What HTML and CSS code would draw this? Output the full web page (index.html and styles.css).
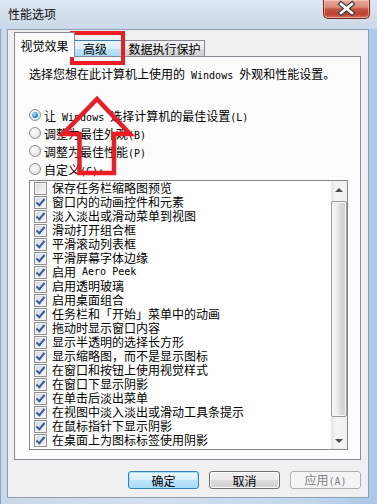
FILE: index.html
```html
<!DOCTYPE html>
<html lang="zh-CN">
<head>
  <meta charset="utf-8">
  <title>性能选项</title>
  <link rel="stylesheet" href="styles.css">
</head>
<body>
  <div class="window">
    <div class="titlebar">
      <span class="title">性能选项</span>
      <div class="close">
        <svg width="47" height="19" viewBox="0 0 47 19">
          <path d="M18 5 L29 14 M29 5 L18 14" stroke="#3f3f3f" stroke-width="5" stroke-linecap="square" fill="none"/>
          <path d="M18 5 L29 14 M29 5 L18 14" stroke="#ffffff" stroke-width="2.6" stroke-linecap="square" fill="none"/>
        </svg>
      </div>
    </div>

    <div class="client">
      <div class="tabs">
        <div class="tab active">视觉效果</div>
        <div class="tab hover">高级</div>
        <div class="tab wide">数据执行保护</div>
      </div>

      <div class="panel">
        <p class="intro">选择您想在此计算机上使用的<span class="latin"> Windows </span>外观和性能设置。</p>

        <div class="radios">
          <div class="radio-row"><span class="radio on"></span><span>让<span class="latin"> Windows </span>选择计算机的最佳设置<span class="latin">(L)</span></span></div>
          <div class="radio-row"><span class="radio"></span><span>调整为最佳外观<span class="latin">(B)</span></span></div>
          <div class="radio-row"><span class="radio"></span><span>调整为最佳性能<span class="latin">(P)</span></span></div>
          <div class="radio-row"><span class="radio"></span><span>自定义<span class="latin">(C):</span></span></div>
        </div>

        <div class="listbox">
          <ul class="items">
            <li><span class="check"></span>保存任务栏缩略图预览</li>
            <li><span class="check on"></span>窗口内的动画控件和元素</li>
            <li><span class="check on"></span>淡入淡出或滑动菜单到视图</li>
            <li><span class="check on"></span>滑动打开组合框</li>
            <li><span class="check on"></span>平滑滚动列表框</li>
            <li><span class="check on"></span>平滑屏幕字体边缘</li>
            <li><span class="check on"></span>启用<span class="latin">&nbsp;Aero Peek</span></li>
            <li><span class="check on"></span>启用透明玻璃</li>
            <li><span class="check on"></span>启用桌面组合</li>
            <li><span class="check on"></span>任务栏和「开始」菜单中的动画</li>
            <li><span class="check on"></span>拖动时显示窗口内容</li>
            <li><span class="check on"></span>显示半透明的选择长方形</li>
            <li><span class="check on"></span>显示缩略图，而不是显示图标</li>
            <li><span class="check on"></span>在窗口和按钮上使用视觉样式</li>
            <li><span class="check on"></span>在窗口下显示阴影</li>
            <li><span class="check on"></span>在单击后淡出菜单</li>
            <li><span class="check on"></span>在视图中淡入淡出或滑动工具条提示</li>
            <li><span class="check on"></span>在鼠标指针下显示阴影</li>
            <li><span class="check on"></span>在桌面上为图标标签使用阴影</li>
          </ul>
          <div class="scrollbar">
            <div class="sb-btn"><span class="tri up"></span></div>
            <div class="sb-track"><div class="sb-thumb"></div></div>
            <div class="sb-btn"><span class="tri down"></span></div>
          </div>
        </div>
      </div>

      <div class="buttons">
        <button class="btn default">确定</button>
        <button class="btn">取消</button>
        <button class="btn disabled">应用<span class="latin">(A)</span></button>
      </div>
    </div>

    <!-- red annotation drawn over the dialog -->
    <div class="mark-box"></div>
    <svg class="mark-arrow" width="377" height="504" viewBox="0 0 377 504">
      <polygon points="97,99 130,134 114,134 114,173 79.5,173 79.5,134 63,134" fill="none" stroke="#ec1c24" stroke-width="4.5" stroke-linejoin="miter"/>
    </svg>
  </div>
</body>
</html>
```

FILE: styles.css
```css
* {
  box-sizing: border-box;
}

body {
  margin: 0;
  background: #c6d8eb;
  color: #000;
  font-family: "Noto Sans CJK SC", sans-serif;
  font-size: 12px;
}

.latin {
  font-family: "DejaVu Sans Mono", monospace;
  font-size: 10px;
}

.window {
  position: relative;
  width: 377px;
  height: 504px;
  overflow: hidden;
  background: linear-gradient(90deg, #c9d8e8 0%, #d3dfec 40%, #c4d7ec 80%, #a9c8ea 100%);
  box-shadow: inset 1px 0 0 #8ea4bd;
}

.titlebar {
  display: flex;
  justify-content: space-between;
  align-items: flex-start;
  height: 29px;
  padding-left: 8px;
  background: linear-gradient(180deg, #dfe8f2 0%, #d2deeb 60%, #cad9ea 100%);
}

.title {
  margin-top: 6px;
  line-height: 16px;
  color: #0c0c0c;
}

.close {
  width: 47px;
  height: 19px;
  margin-right: 7px;
  border: 1px solid #6b2a22;
  border-top: none;
  border-radius: 0 0 5px 5px;
  background: linear-gradient(180deg, #e9a99c 0%, #db8a78 40%, #c65441 50%, #c0432f 80%, #d7775f 100%);
  box-shadow: inset 0 0 0 1px rgba(255, 220, 210, 0.5);
}

.close svg {
  display: block;
  margin: -1px 0 0 -1px;
}

.client {
  width: 362px;
  height: 469px;
  margin-left: 7px;
  padding-top: 2px;
  border: 1px solid #8d9fb5;
  background: #f0f0f0;
}

.tabs {
  display: flex;
  align-items: flex-end;
  height: 24px;
  padding-left: 6px;
}

.tab {
  height: 16px;
  line-height: 15px;
  border: 1px solid #898c95;
  border-bottom: none;
  background: linear-gradient(180deg, #f2f2f2 0%, #ebebeb 50%, #dddddd 50%, #cfcfcf 100%);
  text-align: center;
}

.tab.active {
  position: relative;
  z-index: 2;
  width: 61px;
  height: 25px;
  margin-bottom: -1px;
  padding-top: 6px;
  line-height: 14px;
  background: #fcfcfc;
}

.tab.hover {
  width: 51px;
  margin-left: -2px;
  padding-left: 9px;
  text-align: left;
  border-color: #3c7fb1;
  background: linear-gradient(180deg, #eaf6fd 0%, #d9f0fc 50%, #bee6fd 50%, #a7d9f5 100%);
}

.tab.wide {
  width: 81px;
}

.panel {
  width: 347px;
  height: 404px;
  margin-left: 6px;
  padding: 10px 0 0 14px;
  border: 1px solid #898c95;
  background: #fcfcfc;
}

.intro {
  margin: 0;
  line-height: 14px;
}

.radios {
  margin-top: 23px;
}

.radio-row {
  display: flex;
  align-items: center;
  height: 18px;
}

.radio {
  position: relative;
  width: 12px;
  height: 12px;
  margin-right: 3px;
  border: 1px solid #8e8f8f;
  border-radius: 50%;
  background: radial-gradient(circle at 40% 35%, #ffffff 0%, #f0f0f0 40%, #d3d3d3 100%);
}

.radio.on::after {
  content: "";
  position: absolute;
  left: 2px;
  top: 2px;
  width: 6px;
  height: 6px;
  border-radius: 50%;
  background: radial-gradient(circle at 35% 35%, #b9ecff 0%, #3e9ee0 45%, #155fa8 100%);
}

.listbox {
  display: flex;
  width: 319px;
  height: 270px;
  margin-top: 2px;
  border: 1px solid #828790;
  background: #fff;
}

.items {
  flex: 1;
  margin: 0;
  padding: 0 0 0 4px;
  list-style: none;
}

.items li {
  display: flex;
  align-items: center;
  height: 14px;
  line-height: 14px;
  white-space: nowrap;
}

.check {
  position: relative;
  flex: none;
  width: 13px;
  height: 13px;
  margin-right: 5px;
  border: 1px solid #8f8f8f;
  background: linear-gradient(135deg, #d9dadb 0%, #eeeeee 60%, #fbfbfb 100%);
  box-shadow: inset 0 0 0 1px #f4f4f4;
}

.check.on {
  background: linear-gradient(135deg, #cfd6e4 0%, #e6eaf2 60%, #f6f8fb 100%);
}

.check.on::after {
  content: "";
  position: absolute;
  left: 3px;
  top: 0;
  width: 3px;
  height: 7px;
  border-right: 2px solid #3b5a9a;
  border-bottom: 2px solid #3b5a9a;
  transform: rotate(40deg);
}

.scrollbar {
  display: flex;
  flex-direction: column;
  width: 16px;
  background: linear-gradient(90deg, #e6e6e6 0%, #f4f4f4 30%, #f0f0f0 100%);
}

.sb-btn {
  display: flex;
  justify-content: center;
  align-items: center;
  height: 17px;
}

.tri {
  width: 0;
  height: 0;
  border-left: 4px solid transparent;
  border-right: 4px solid transparent;
}

.tri.up {
  border-bottom: 4px solid #4d4d4d;
}

.tri.down {
  border-top: 4px solid #4d4d4d;
}

.sb-track {
  flex: 1;
  padding-top: 3px;
}

.sb-thumb {
  height: 216px;
  border: 1px solid #9a9a9a;
  border-radius: 2px;
  background: linear-gradient(90deg, #f6f6f6 0%, #ececec 40%, #dadada 60%, #cfcfcf 100%);
  box-shadow: inset 0 0 0 1px #f8f8f8;
}

.buttons {
  display: flex;
  justify-content: flex-end;
  gap: 10px;
  margin-top: 11px;
  padding-right: 7px;
}

.btn {
  width: 71px;
  height: 18px;
  padding: 0;
  border: 1px solid #707070;
  border-radius: 3px;
  background: linear-gradient(180deg, #f2f2f2 0%, #ebebeb 50%, #dddddd 50%, #cfcfcf 100%);
  box-shadow: inset 0 0 0 1px #fbfbfb;
  color: #000;
  font-family: "Noto Sans CJK SC", sans-serif;
  font-size: 12px;
  line-height: 15px;
}

.btn.default {
  border-color: #3c7fb1;
  background: linear-gradient(180deg, #eaf6fd 0%, #d9f0fc 50%, #bee6fd 50%, #a7d9f5 100%);
  box-shadow: inset 0 0 0 1px #9ee1fb;
}

.btn.disabled {
  border-color: #adb2b5;
  background: #f4f4f4;
  box-shadow: none;
  color: #838383;
}

.mark-box {
  position: absolute;
  left: 70px;
  top: 31px;
  width: 55px;
  height: 34px;
  border: 4.5px solid #ec1c24;
}

.mark-arrow {
  position: absolute;
  left: 0;
  top: 0;
  pointer-events: none;
}
```
